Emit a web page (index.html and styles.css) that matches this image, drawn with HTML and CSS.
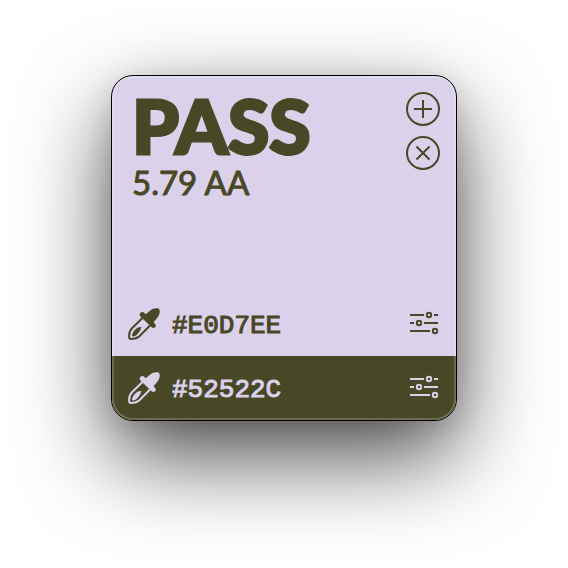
FILE: index.html
```html
<!DOCTYPE html>
<html lang="en">
<head>
<meta charset="utf-8">
<title>Contrast</title>
<link rel="stylesheet" href="styles.css">
</head>
<body>
<svg class="sprite" aria-hidden="true">
  <symbol id="dropper" viewBox="0 0 32 32">
    <path fill="currentColor" d="M12.500 4.800c1.400-1.200 3-.9 4 .2l1.300 1.300 4-3.600C24 .8 27 0 29.500 .3c1.300.2 2.100 1 2.200 2.200.2 2.600-.7 5.300-2.700 7.700l-3.500 4 1.300 1.300c1.100 1.100 1.300 2.600.3 3.700s-2.600.9-3.700-.2L12.400 8.500c-1.100-1.100-1-2.600.1-3.700Z"/>
    <path fill="none" stroke="currentColor" stroke-width="2" d="M14.500 10 3.700 20.500C1.500 22.800 1 26 1.100 29c0 1.300.7 1.900 2 1.900 3 .1 5.900-.4 8.300-2.700L22 17.500"/>
    <path fill="currentColor" d="M13.500 19 9.800 19.600c-2.300 1.600-5.500 4.600-5.800 8 .1.700.5 1 1.200 1 3.600-.8 7-5.100 8.300-9.600Z"/>
  </symbol>
  <symbol id="sliders" viewBox="0 0 32 32">
    <path fill="none" stroke="currentColor" stroke-width="2" d="M2 7h14M26 7h4M2 15h4M16 15h14M2 23h20"/>
    <g fill="none" stroke="currentColor" stroke-width="2">
      <circle cx="21" cy="7" r="2.200"/><circle cx="11" cy="15" r="2.200"/><circle cx="27" cy="23" r="2.200"/>
    </g>
  </symbol>
</svg>
<main class="card">
  <header class="top">
    <div class="result">
      <h1 class="verdict">PASS</h1>
      <p class="ratio">5.79 AA</p>
    </div>
    <div class="actions">
      <button class="icon-button" type="button" aria-label="Add">
        <svg viewBox="0 0 34 34" width="34" height="34" fill="none" stroke="currentColor" stroke-width="2"><circle cx="17" cy="17" r="16"/><path d="M17 8v18M8 17h18"/></svg>
      </button>
      <button class="icon-button" type="button" aria-label="Close">
        <svg viewBox="0 0 34 34" width="34" height="34" fill="none" stroke="currentColor" stroke-width="2"><circle cx="17" cy="17" r="16"/><path d="m10.500 10.500 13 13M23.500 10.500l-13 13"/></svg>
      </button>
    </div>
  </header>
  <div class="row">
    <button class="icon-button" type="button" aria-label="Pick background"><svg width="32" height="32"><use href="#dropper"/></svg></button>
    <input class="hex" type="text" value="#E0D7EE" aria-label="Background color" spellcheck="false">
    <button class="icon-button" type="button" aria-label="Adjust background"><svg width="32" height="32"><use href="#sliders"/></svg></button>
  </div>
  <div class="row row-dark">
    <button class="icon-button" type="button" aria-label="Pick text color"><svg width="32" height="32"><use href="#dropper"/></svg></button>
    <input class="hex" type="text" value="#52522C" aria-label="Text color" spellcheck="false">
    <button class="icon-button" type="button" aria-label="Adjust text color"><svg width="32" height="32"><use href="#sliders"/></svg></button>
  </div>
</main>
</body>
</html>
```
FILE: styles.css
```css
* { box-sizing: border-box; }
:root { --light: #dbd1ea; --dark: #484726; }
body {
  margin: 0;
  min-height: 100vh;
  display: grid;
  place-items: center;
  padding-bottom: 72px;
  background: #fff;
  font-family: Lato, sans-serif;
}
.sprite { display: none; }
.card {
  position: relative;
  width: 100%;
  max-width: 346px;
  aspect-ratio: 1;
  display: flex;
  flex-direction: column;
  overflow: hidden;
  border: 1px solid #000;
  border-radius: 22px;
  background: var(--light);
  color: var(--dark);
  box-shadow: 0 36px 90px rgba(0, 0, 0, .7), 0 6px 28px rgba(0, 0, 0, .12);
}
.card::after {
  content: "";
  position: absolute;
  inset: 0;
  border-radius: 21px;
  box-shadow: inset 0 0 0 2px rgba(255, 255, 255, .2);
  pointer-events: none;
}
.top {
  flex: 1;
  display: flex;
  justify-content: space-between;
  align-items: flex-start;
  padding: 12px 16px 0 20px;
}
.verdict {
  margin: 0;
  font-size: 75px;
  line-height: 74px;
  font-weight: 900;
  -webkit-text-stroke: 3px currentColor;
}
.ratio {
  margin: 0;
  font-size: 33px;
  line-height: 40px;
  -webkit-text-stroke: 1px currentColor;
}
.actions { display: flex; flex-direction: column; gap: 10px; padding-top: 4px; }
.icon-button {
  display: block;
  padding: 0;
  border: 0;
  background: none;
  color: inherit;
  cursor: pointer;
}
.icon-button svg { display: block; }
.row {
  display: flex;
  align-items: center;
  height: 64px;
  padding: 0 16px;
}
.row-dark { background: var(--dark); color: var(--light); }
.hex {
  flex: 1;
  min-width: 0;
  padding: 4px 12px 0;
  border: 0;
  outline: 0;
  background: none;
  color: inherit;
  font: 400 26px/32px "Liberation Mono", monospace;
  -webkit-text-stroke: 1px currentColor;
}
```
